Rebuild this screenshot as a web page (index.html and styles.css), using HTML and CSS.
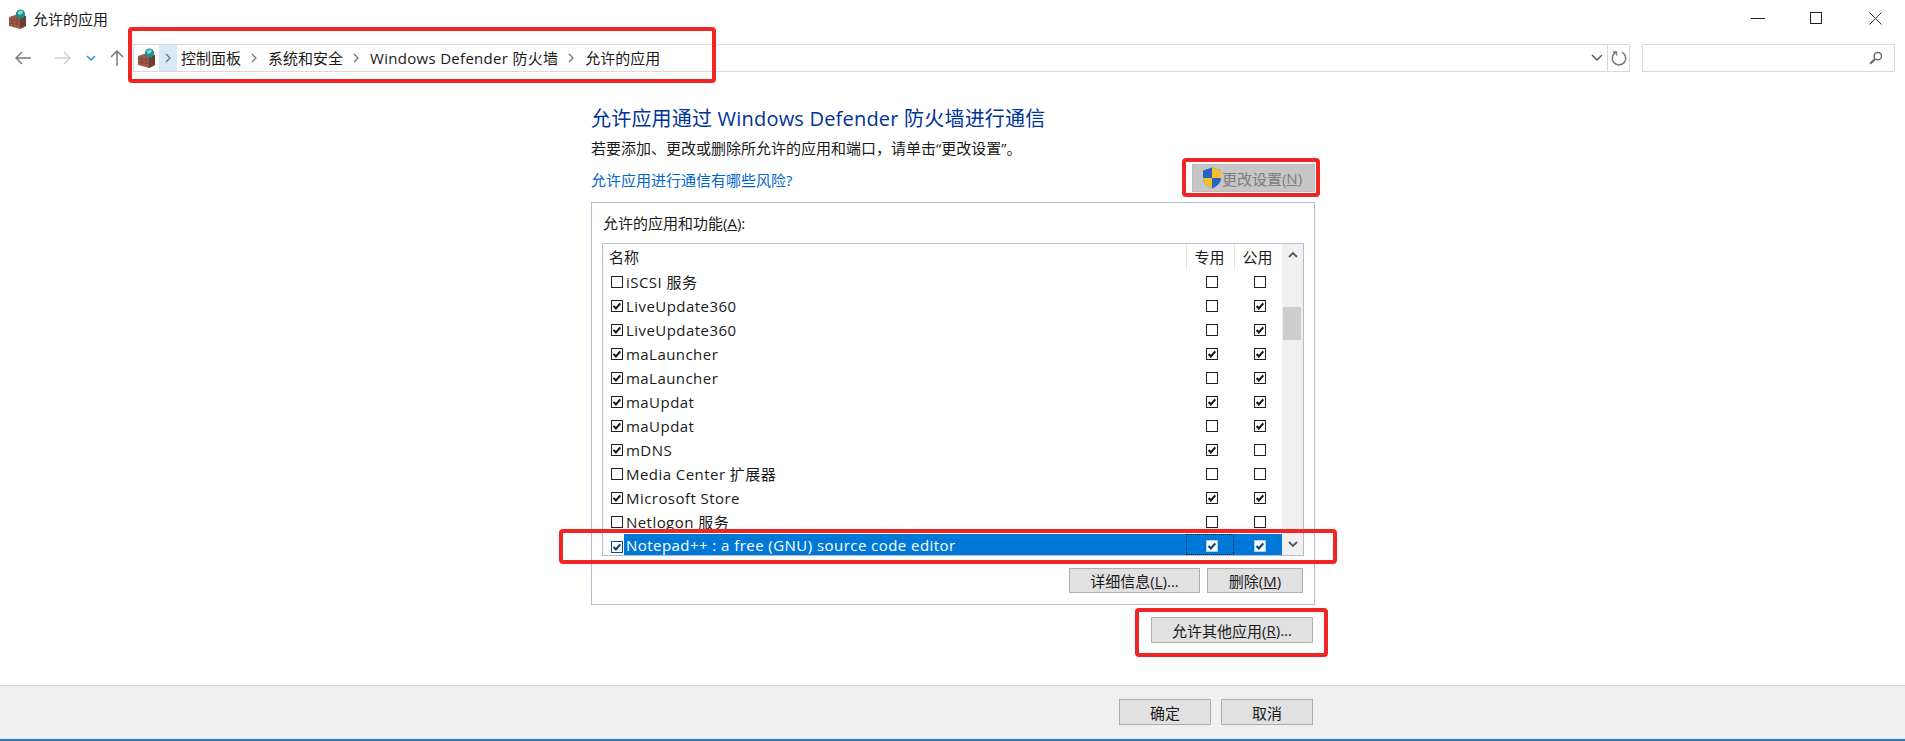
FILE: index.html
```html
<!DOCTYPE html>
<html lang="zh-CN">
<head>
<meta charset="utf-8">
<title>允许的应用</title>
<link rel="stylesheet" href="styles.css">
</head>
<body>
<svg class="defs" width="0" height="0">
  <symbol id="fw" viewBox="0 0 20 20">
    <path d="M1 8l9-3 8 2v10l-6 3-11-3z" fill="#9c5a48"/>
    <path d="M12 9l6-2v10l-6 3z" fill="#6e3d33"/>
    <path d="M1 11l11 1M1 14l11 1.5M5 9v3M9 9v3M5 12.5v3M9 12.5v3" stroke="#7a4437" stroke-width=".8" fill="none"/>
    <circle cx="12.5" cy="5" r="4.6" fill="#1f8f8c"/>
    <path d="M9.5 3.5a4 4 0 0 1 5.500-1.500l-1 3-3 1z" fill="#7fd6c8"/>
  </symbol>
  <symbol id="chk" viewBox="0 0 12 12">
    <path d="M2.600 5.800l2.300 2.600 4.400-5" fill="none" stroke="currentColor" stroke-width="2"/>
  </symbol>
  <symbol id="crumb" viewBox="0 0 8 12">
    <path d="M2 2l4 4-4 4" fill="none" stroke="#6d6d6d" stroke-width="1.2"/>
  </symbol>
</svg>

<header class="titlebar">
  <svg class="ticon"><use href="#fw"/></svg>
  <span class="ttext">允许的应用</span>
  <div class="winctl">
    <svg class="wbtn" viewBox="0 0 59 24"><path d="M0 6.500h14" stroke="#222" fill="none"/></svg>
    <svg class="wbtn" viewBox="0 0 59 24"><rect x=".5" y=".5" width="11" height="11" stroke="#222" fill="none"/></svg>
    <svg class="wbtn wclose" viewBox="0 0 14 24"><path d="M.5.5l12 12M12.500.5l-12 12" stroke="#333" fill="none"/></svg>
  </div>
</header>

<nav class="toolbar">
  <div class="navs">
    <svg class="nav nav-back" viewBox="0 0 16 14"><path d="M1 7h15M7 1L1 7l6 6" fill="none" stroke="#7a7a7a" stroke-width="1.5"/></svg>
    <svg class="nav nav-fwd" viewBox="0 0 16 14"><path d="M0 7h15M9 1l6 6-6 6" fill="none" stroke="#cfcfcf" stroke-width="1.5"/></svg>
    <svg class="nav nav-drop" viewBox="0 0 10 7"><path d="M1 1l4 4 4-4" fill="none" stroke="#3f8fd0" stroke-width="1.5"/></svg>
    <svg class="nav nav-up" viewBox="0 0 14 16"><path d="M7 16V1M1 7l6-6 6 6" fill="none" stroke="#7a7a7a" stroke-width="1.5"/></svg>
  </div>
  <div class="addr">
    <svg class="aicon"><use href="#fw"/></svg>
    <span class="firstchev"><svg class="chev"><use href="#crumb"/></svg></span>
    <span class="crumb c1">控制面板</span>
    <svg class="chev sep"><use href="#crumb"/></svg>
    <span class="crumb">系统和安全</span>
    <svg class="chev sep"><use href="#crumb"/></svg>
    <span class="crumb wide">Windows Defender 防火墙</span>
    <svg class="chev sep"><use href="#crumb"/></svg>
    <span class="crumb">允许的应用</span>
    <svg class="addrdrop" viewBox="0 0 12 8"><path d="M1 1l5 5 5-5" fill="none" stroke="#555" stroke-width="1.4"/></svg>
    <span class="refresh">
      <svg viewBox="0 0 16 16" width="16" height="16"><path d="M4.800 2.300a6.700 6.700 0 1 0 6.400 0" fill="none" stroke="#777" stroke-width="1.500"/><path d="M2 2h3.500v3.500" fill="none" stroke="#777" stroke-width="1.300"/></svg>
    </span>
  </div>
  <div class="search">
    <svg viewBox="0 0 14 14" width="14" height="14"><circle cx="8.800" cy="5.200" r="3.700" fill="none" stroke="#666" stroke-width="1.400"/><path d="M6 8L1.200 12.800" stroke="#666" stroke-width="2"/></svg>
  </div>
</nav>

<main class="main">
  <h1 class="heading">允许应用通过 Windows Defender 防火墙进行通信</h1>
  <p class="desc">若要添加、更改或删除所允许的应用和端口，请单击“更改设置”。</p>
  <div class="linkrow">
    <a class="link">允许应用进行通信有哪些风险?</a>
    <button class="btn btn-change">
      <svg class="shield" viewBox="0 0 20 22"><path d="M10 .5l9 3V11c0 5.500-4.500 8.500-9 10.500C5.500 19.500 1 16.500 1 11V3.500z" fill="#2a62c0"/><path d="M10 .5l9 3V11h-9zM10 11H1c0 5.500 4.500 8.500 9 10.500z" fill="#f2bf2c"/></svg>更改设置(<u>N</u>)
    </button>
  </div>

  <section class="group">
    <div class="legend">允许的应用和功能(<u>A</u>):</div>
    <div class="list">
      <div class="table">
        <div class="thead"><span class="tname">名称</span><span class="th">专用</span><span class="th">公用</span></div>
        <div class="row"><span class="cb"></span><span class="nm">iSCSI 服务</span><span class="cell"><span class="cb"></span></span><span class="cell"><span class="cb"></span></span></div>
        <div class="row"><span class="cb"><svg><use href="#chk"/></svg></span><span class="nm">LiveUpdate360</span><span class="cell"><span class="cb"></span></span><span class="cell"><span class="cb"><svg><use href="#chk"/></svg></span></span></div>
        <div class="row"><span class="cb"><svg><use href="#chk"/></svg></span><span class="nm">LiveUpdate360</span><span class="cell"><span class="cb"></span></span><span class="cell"><span class="cb"><svg><use href="#chk"/></svg></span></span></div>
        <div class="row"><span class="cb"><svg><use href="#chk"/></svg></span><span class="nm">maLauncher</span><span class="cell"><span class="cb"><svg><use href="#chk"/></svg></span></span><span class="cell"><span class="cb"><svg><use href="#chk"/></svg></span></span></div>
        <div class="row"><span class="cb"><svg><use href="#chk"/></svg></span><span class="nm">maLauncher</span><span class="cell"><span class="cb"></span></span><span class="cell"><span class="cb"><svg><use href="#chk"/></svg></span></span></div>
        <div class="row"><span class="cb"><svg><use href="#chk"/></svg></span><span class="nm">maUpdat</span><span class="cell"><span class="cb"><svg><use href="#chk"/></svg></span></span><span class="cell"><span class="cb"><svg><use href="#chk"/></svg></span></span></div>
        <div class="row"><span class="cb"><svg><use href="#chk"/></svg></span><span class="nm">maUpdat</span><span class="cell"><span class="cb"></span></span><span class="cell"><span class="cb"><svg><use href="#chk"/></svg></span></span></div>
        <div class="row"><span class="cb"><svg><use href="#chk"/></svg></span><span class="nm">mDNS</span><span class="cell"><span class="cb"><svg><use href="#chk"/></svg></span></span><span class="cell"><span class="cb"></span></span></div>
        <div class="row"><span class="cb"></span><span class="nm">Media Center 扩展器</span><span class="cell"><span class="cb"></span></span><span class="cell"><span class="cb"></span></span></div>
        <div class="row"><span class="cb"><svg><use href="#chk"/></svg></span><span class="nm">Microsoft Store</span><span class="cell"><span class="cb"><svg><use href="#chk"/></svg></span></span><span class="cell"><span class="cb"><svg><use href="#chk"/></svg></span></span></div>
        <div class="row"><span class="cb"></span><span class="nm">Netlogon 服务</span><span class="cell"><span class="cb"></span></span><span class="cell"><span class="cb"></span></span></div>
        <div class="row sel"><span class="cb"><svg><use href="#chk"/></svg></span><span class="nm">Notepad++ : a free (GNU) source code editor</span><span class="cell focus"><span class="cb"><svg><use href="#chk"/></svg></span></span><span class="cell"><span class="cb"><svg><use href="#chk"/></svg></span></span></div>
      </div>
      <div class="scrollbar">
        <span class="sarrow"><svg viewBox="0 0 10 7" width="10" height="7"><path d="M1 6l4-4 4 4" fill="none" stroke="#555" stroke-width="1.800"/></svg></span>
        <span class="thumb"></span>
        <span class="sarrow sdown"><svg viewBox="0 0 10 7" width="10" height="7"><path d="M1 1l4 4 4-4" fill="none" stroke="#555" stroke-width="1.800"/></svg></span>
      </div>
    </div>
    <div class="grpbtns">
      <button class="btn btn-detail">详细信息(<u>L</u>)...</button>
      <button class="btn btn-del">删除(<u>M</u>)</button>
    </div>
  </section>

  <div class="allowrow"><button class="btn btn-allow">允许其他应用(<u>R</u>)...</button></div>
</main>

<footer class="footer">
  <button class="btn btn-foot">确定</button>
  <button class="btn btn-foot">取消</button>
</footer>

<div class="mark m1"></div>
<div class="mark m2"></div>
<div class="mark m3"></div>
<div class="mark m4"></div>
</body>
</html>
```

FILE: styles.css
```css
* { box-sizing: border-box; }
html, body { margin: 0; height: 741px; overflow: hidden; }
body {
  position: relative;
  display: flex;
  flex-direction: column;
  background: #fff;
  color: #1a1a1a;
  font-family: "Open Sans", "Noto Sans CJK SC", sans-serif;
  font-size: 15px;
}
.defs { position: absolute; }

.titlebar { height: 44px; display: flex; align-items: flex-start; padding: 9px 0 0 8px; flex: none; }
.ticon { width: 20px; height: 20px; }
.ttext { margin-left: 5px; line-height: 20px; }
.winctl { margin-left: auto; display: flex; padding-top: 3px; padding-right: 22px; }
.wbtn { width: 59px; height: 24px; display: block; }
.wclose { width: 14px; }

.toolbar { height: 28px; display: flex; flex: none; }
.navs { width: 133px; flex: none; display: flex; align-items: center; padding-left: 15px; }
.nav { display: block; flex: none; }
.nav-back { width: 16px; height: 14px; }
.nav-fwd { width: 16px; height: 14px; margin-left: 24px; }
.nav-drop { width: 10px; height: 7px; margin-left: 15px; }
.nav-up { width: 14px; height: 16px; margin-left: 14px; }

.addr {
  flex: 1;
  display: flex;
  align-items: center;
  border: 1px solid #d9d9d9;
  padding-left: 3px;
}
.aicon { width: 20px; height: 20px; flex: none; }
.firstchev { width: 18px; height: 26px; margin-left: 2px; background: #d9e9f7; display: flex; align-items: center; justify-content: center; flex: none; }
.chev { width: 8px; height: 12px; flex: none; }
.crumb { white-space: nowrap; line-height: 26px; }
.c1 { margin-left: 4px; }
.wide { letter-spacing: .3px; }
.sep { margin: 0 10px 0 9px; }
.addrdrop { width: 12px; height: 8px; margin-left: auto; margin-right: 4px; flex: none; }
.refresh { width: 22px; height: 26px; border-left: 1px solid #d9d9d9; display: flex; align-items: center; justify-content: center; flex: none; }
.search {
  width: 253px;
  margin: 0 10px 0 12px;
  border: 1px solid #d9d9d9;
  display: flex;
  align-items: center;
  justify-content: flex-end;
  padding-right: 11px;
  flex: none;
}

.main { flex: 1; padding: 32px 0 0 591px; }
.heading { margin: 0; font-size: 20px; font-weight: 400; line-height: 30px; color: #003399; white-space: nowrap; letter-spacing: .2px; }
.desc { margin: 4px 0 0; line-height: 20px; height: 20px; font-size: 15px; white-space: nowrap; }
.linkrow { width: 724px; height: 28px; margin-top: 6px; display: flex; align-items: center; }
.link { color: #0066cc; padding-top: 2px; font-size: 15px; }

.btn {
  font: inherit;
  color: inherit;
  background: #e1e1e1;
  border: 1px solid #adadad;
  padding: 0;
  display: flex;
  align-items: center;
  justify-content: center;
  white-space: nowrap;
}
.btn-change { margin-left: auto; width: 123px; height: 28px; padding-right: 3px; background: #c6c6c6; color: #7d7d7d; border-color: #bcbcbc; }
.shield { width: 20px; height: 22px; flex: none; }

.group { width: 724px; height: 403px; margin-top: 10px; border: 1px solid #b8b8d0; padding: 9px 10px 11px 10px; }
.legend { line-height: 22px; height: 22px; margin-bottom: 9px; padding-left: 1px; }
.list { height: 313px; border: 1px solid #b8b8d0; display: flex; overflow: hidden; }
.table { flex: 1; min-width: 0; overflow: hidden; }
.thead { height: 26px; display: flex; align-items: center; }
.tname { flex: 1; padding: 0 0 2px 6px; }
.th { width: 48px; height: 26px; line-height: 26px; text-align: center; padding-right: 2px; border-left: 1px solid #e6e6e6; }
.row { height: 24px; display: flex; align-items: center; padding-left: 8px; }
.cb { width: 12px; height: 12px; border: 1.5px solid #222; background: #fff; color: #111; display: block; flex: none; position: relative; }
.cb svg { position: absolute; left: -1px; top: -1px; width: 12px; height: 12px; display: block; }
.nm { flex: 1; min-width: 0; margin-left: 1px; padding-left: 2px; height: 21px; line-height: 21px; white-space: nowrap; overflow: hidden; letter-spacing: .45px; }
.cell { width: 48px; height: 21px; display: flex; align-items: center; justify-content: center; padding-left: 3px; flex: none; }
.row.sel { align-items: flex-start; }
.row.sel > .cb { margin-top: 7px; border-color: #0a4f8a; color: #0a3a66; }
.sel .nm { line-height: 23px; }
.sel .nm, .sel .cell { background: #0078d7; color: #fff; }
.sel .cell .cb { border-color: #9fd0f5; color: #0a3a66; }
.sel .cell { padding-top: 3px; }
.focus { outline: 1px dotted #0b2a45; outline-offset: -1px; }

.scrollbar { width: 21px; flex: none; background: #f0f0f0; display: flex; flex-direction: column; }
.sarrow { height: 21px; display: flex; align-items: center; justify-content: center; flex: none; }
.thumb { height: 33px; margin: 42px 2px 0 1px; background: #cdcdcd; flex: none; }
.sdown { margin-top: auto; }

.grpbtns { display: flex; justify-content: flex-end; gap: 7px; margin-top: 12px; margin-right: 1px; }
.btn-detail { width: 131px; height: 25px; }
.btn-del { width: 96px; height: 25px; }
.allowrow { width: 722px; display: flex; justify-content: flex-end; margin-top: 12px; }
.btn-allow { width: 162px; height: 26px; }

.footer {
  flex: none;
  height: 56px;
  background: #f0f0f0;
  border-top: 1px solid #cfcfcf;
  border-bottom: 2px solid #2a7ab8;
  display: flex;
  justify-content: flex-end;
  gap: 10px;
  padding: 13px 592px 0 0;
}
.btn-foot { width: 92px; height: 26px; }

.mark { position: absolute; border: 4px solid #f22525; border-radius: 4px; pointer-events: none; }
.m1 { left: 128px; top: 27px; width: 588px; height: 56px; }
.m2 { left: 1182px; top: 158px; width: 138px; height: 39px; }
.m3 { left: 559px; top: 529px; width: 778px; height: 35px; }
.m4 { left: 1135px; top: 608px; width: 193px; height: 49px; }
```
